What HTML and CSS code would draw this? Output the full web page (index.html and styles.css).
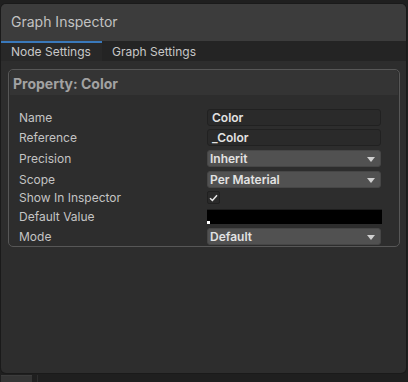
FILE: index.html
```html
<!DOCTYPE html>
<html>
<head>
<meta charset="utf-8">
<link rel="stylesheet" href="styles.css">
</head>
<body>
<div class="window">
  <div class="panel">
    <div class="title">Graph Inspector</div>
    <div class="tabs">
      <div class="tab active">Node Settings</div>
      <div class="tab">Graph Settings</div>
    </div>
    <div class="content">
      <div class="box">
        <div class="box-head">Property: Color</div>
        <div class="rows">
          <div class="row r-name"><span class="label">Name</span><div class="field text">Color</div></div>
          <div class="row r-ref"><span class="label">Reference</span><div class="field text">_Color</div></div>
          <div class="row r-prec"><span class="label">Precision</span><div class="field drop">Inherit<span class="arrow"></span></div></div>
          <div class="row r-scope"><span class="label">Scope</span><div class="field drop">Per Material<span class="arrow"></span></div></div>
          <div class="row r-show"><span class="label">Show In Inspector</span><div class="check"><svg width="9" height="8" viewBox="0 0 9 8"><path d="M1 4.2 L3.4 6.4 L8 1.2" fill="none" stroke="#e6e6e6" stroke-width="1.5"/></svg></div></div>
          <div class="row r-def"><span class="label">Default Value</span><div class="color"><span class="alpha"></span></div></div>
          <div class="row r-mode"><span class="label">Mode</span><div class="field drop">Default<span class="arrow"></span></div></div>
        </div>
      </div>
    </div>
  </div>
  <div class="footer">
    <div class="foot-a"></div>
    <div class="foot-b"></div>
  </div>
</div>
</body>
</html>
```

FILE: styles.css
```css
html, body {
  margin: 0;
  padding: 0;
  background: #1f1f1f;
  width: 408px;
  height: 382px;
  overflow: hidden;
  font-family: Inter, "Noto Sans", sans-serif;
}
.window {
  display: flex;
  flex-direction: column;
  height: 382px;
  padding: 4px 2px 0 1px;
  box-sizing: border-box;
}
.panel {
  height: 369px;
  display: flex;
  flex-direction: column;
  background: #2d2d2d;
  border-radius: 5px;
  overflow: hidden;
  box-shadow: 0 0 0 1px #1a1a1a;
}
.title {
  height: 37px;
  background: #3c3c3c;
  color: #c2c2c2;
  font-size: 14px;
  line-height: 36px;
  padding-left: 10px;
}
.tabs {
  height: 20px;
  background: #242424;
  display: flex;
}
.tab {
  font-size: 12px;
  color: #c8c8c8;
  line-height: 16px;
  padding: 3px 10px 0;
  box-sizing: border-box;
}
.tab.active {
  width: 101px;
  border-top: 2px solid #3a79bb;
  padding-top: 1px;
  background: #282828;
}
.content {
  flex: 1;
  padding: 8px 6px 0 7px;
}
.box {
  border: 1px solid #575757;
  border-radius: 5px;
  height: 178px;
  box-sizing: border-box;
}
.box-head {
  height: 23px;
  margin: 0 1px;
  background: #343434;
  border-radius: 4px 4px 0 0;
  color: #a2a2a2;
  font-weight: 700;
  font-size: 14px;
  line-height: 23px;
  padding: 2px 0 0 3px;
}
.rows {
  padding: 14px 0 0 10px;
  display: flex;
  flex-direction: column;
}
.row {
  display: flex;
  align-items: center;
}
.label {
  width: 188px;
  font-size: 12px;
  color: #c4c4c4;
}
.field {
  width: 174px;
  height: 17px;
  box-sizing: border-box;
  border-radius: 3px;
  font-size: 12px;
  font-weight: 600;
  color: #e2e2e2;
  position: relative;
}
.text {
  background: #2a2a2a;
  border: 1px solid #212121;
  line-height: 15px;
  padding-left: 4px;
}
.drop {
  background: #515151;
  border: 1px solid #464646;
  line-height: 15px;
  padding-left: 2px;
}
.arrow {
  position: absolute;
  right: 5px;
  top: 6px;
  width: 0;
  height: 0;
  border-left: 4px solid transparent;
  border-right: 4px solid transparent;
  border-top: 5px solid #d0d0d0;
}
.r-name { height: 17px; }
.r-ref { height: 17px; margin-top: 3px; }
.r-prec { height: 17px; margin-top: 4px; }
.r-scope { height: 17px; margin-top: 4px; }
.r-show { height: 13px; margin-top: 3px; }
.r-def { height: 15px; margin-top: 5px; }
.r-mode { height: 17px; margin-top: 4px; }
.check {
  width: 13px;
  height: 13px;
  box-sizing: border-box;
  background: #2a2a2a;
  border: 1px solid #202020;
  border-radius: 2px;
  display: flex;
  align-items: center;
  justify-content: center;
}
.color {
  width: 175px;
  height: 15px;
  background: #000;
  border-top: 1px solid #1e1e1e;
  box-sizing: border-box;
  position: relative;
}
.alpha {
  position: absolute;
  left: 0;
  bottom: 0;
  width: 3px;
  height: 3px;
  background: #fff;
}
.footer {
  flex: 1;
  display: flex;
  padding-top: 2px;
}
.foot-a {
  width: 31px;
  background: #353535;
  border-top: 1px solid #3c3c3c;
}
.foot-b {
  width: 1px;
  margin-left: 5px;
  background: #2e2e2e;
}
```
